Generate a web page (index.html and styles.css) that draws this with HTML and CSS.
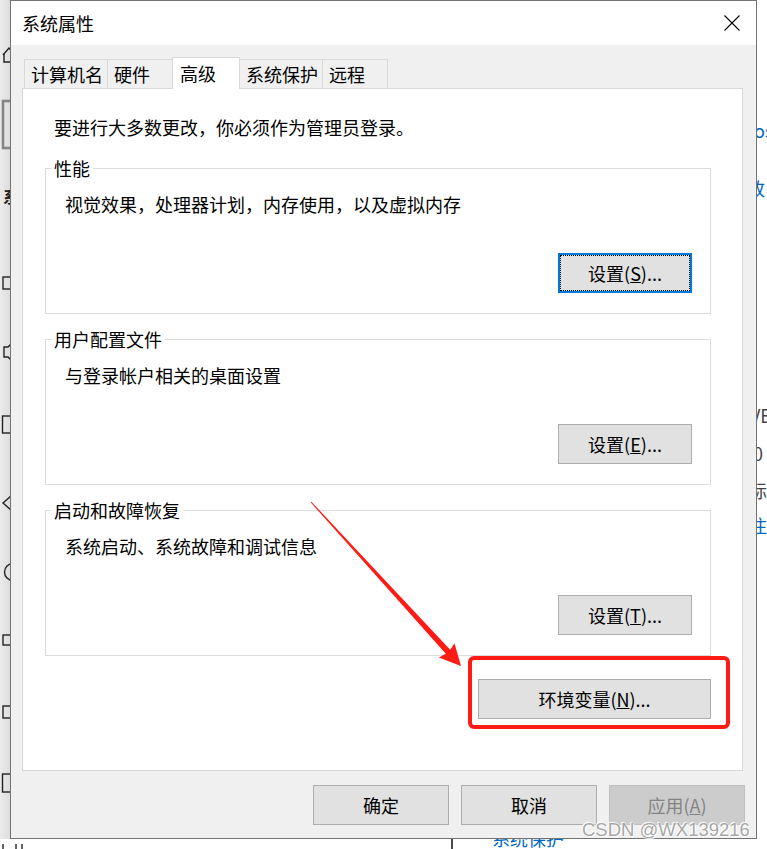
FILE: index.html
```html
<!DOCTYPE html>
<html lang="zh-CN">
<head>
    <meta charset="UTF-8">
    <meta name="viewport" content="width=device-width, initial-scale=1.0">
    <title>系统属性</title>
    <link rel="stylesheet" href="styles.css">
</head>
<body>
    <div class="desktop">
        <!-- 背后的设置窗口（大部分被对话框挡住） -->
        <div class="side"></div>
        <svg class="behind-icons" width="767" height="849" viewBox="0 0 767 849">
            <g fill="none" stroke="#222" stroke-width="1.4">
                <polyline points="3,55 9,48 15,55"/>
                <polyline points="4,54 4,62 14,62"/>
                <rect x="3" y="101" width="20" height="47" stroke="#858585" stroke-width="2.6"/>
                <rect x="3" y="277" width="13" height="12"/>
                <path d="M4 347 H8 L14 341 V363 L8 357 H4 Z"/>
                <rect x="2.5" y="416" width="14" height="17"/>
                <polyline points="11,496 3,503 11,510"/>
                <circle cx="13" cy="572" r="8.5"/>
                <rect x="3" y="635" width="12" height="10"/>
                <rect x="3" y="706" width="12" height="12"/>
                <rect x="2.5" y="774" width="14" height="18"/>
                <path d="M3 844 V849 M16 844 V849 M22 844 V849"/>
            </g>
            <rect x="451" y="835" width="2" height="14" fill="#4a4a4a"/>
        </svg>
        <span class="bg-text side-char">系</span>
        <span class="bg-text blue" style="left:754px; top:118px;">os</span>
        <span class="bg-text blue" style="left:747px; top:176px;">改</span>
        <span class="bg-text gray" style="left:750px; top:403px;">VE</span>
        <span class="bg-text gray" style="left:753px; top:441px;">0</span>
        <span class="bg-text gray" style="left:749px; top:478px;">际</span>
        <span class="bg-text blue" style="left:749px; top:513px;">注</span>
        <span class="bg-text blue" style="left:492px; top:826px;">系统保护</span>

        <div class="window">
            <div class="titlebar">
                <span class="title">系统属性</span>
                <svg class="close" width="16" height="16" viewBox="0 0 16 16">
                    <path d="M0.5 0.5 L15.5 15.5 M15.5 0.5 L0.5 15.5" stroke="#000" stroke-width="1.1" fill="none"/>
                </svg>
            </div>

            <div class="content">
                <div class="tabs">
                    <div class="tab">计算机名</div>
                    <div class="tab">硬件</div>
                    <div class="tab active">高级</div>
                    <div class="tab">系统保护</div>
                    <div class="tab">远程</div>
                </div>

                <div class="panel">
                    <p class="note">要进行大多数更改，你必须作为管理员登录。</p>

                    <fieldset class="group">
                        <legend>性能</legend>
                        <p class="desc">视觉效果，处理器计划，内存使用，以及虚拟内存</p>
                        <div class="row">
                            <button class="btn focus">设置(<u>S</u>)...</button>
                        </div>
                    </fieldset>

                    <fieldset class="group">
                        <legend>用户配置文件</legend>
                        <p class="desc">与登录帐户相关的桌面设置</p>
                        <div class="row">
                            <button class="btn">设置(<u>E</u>)...</button>
                        </div>
                    </fieldset>

                    <fieldset class="group">
                        <legend>启动和故障恢复</legend>
                        <p class="desc">系统启动、系统故障和调试信息</p>
                        <div class="row">
                            <button class="btn">设置(<u>T</u>)...</button>
                        </div>
                    </fieldset>

                    <div class="row env-row">
                        <button class="btn wide">环境变量(<u>N</u>)...</button>
                    </div>
                </div>

                <div class="actions">
                    <button class="btn">确定</button>
                    <button class="btn">取消</button>
                    <button class="btn" disabled>应用(<u>A</u>)</button>
                </div>
            </div>
        </div>

        <!-- 截图上的红色标注 -->
        <div class="mark-box"></div>
        <svg class="mark-arrow" width="767" height="849" viewBox="0 0 767 849">
            <polygon fill="#fe1b16" points="310.6,502.3 445.8,653.8 438.9,657.4 461,666 454.5,643.2 450.2,649.8 311.4,501.7"/>
        </svg>

        <div class="watermark">CSDN @WX139216</div>
    </div>
</body>
</html>
```

FILE: styles.css
```css
* {
    box-sizing: border-box;
}

body {
    margin: 0;
    font-family: "Noto Sans CJK SC", "Microsoft YaHei", sans-serif;
    font-size: 18px;
    line-height: 24px;
    color: #000;
}

.desktop {
    position: relative;
    width: 767px;
    height: 849px;
    overflow: hidden;
    background: #fff;
}

/* 背景窗口的碎片 */
.side {
    position: absolute;
    left: 0;
    top: 0;
    width: 12px;
    height: 839px;
    background: linear-gradient(to right, #ebebeb, #dadada);
}

.behind-icons {
    position: absolute;
    left: 0;
    top: 0;
}

.bg-text {
    position: absolute;
    white-space: nowrap;
}

.blue {
    color: #0067c0;
}

.gray {
    color: #444;
}

.side-char {
    left: 3px;
    top: 184px;
    font-weight: bold;
    font-size: 16px;
    color: #222;
}

/* 对话框 */
.window {
    position: absolute;
    left: 10px;
    top: 0;
    width: 747px;
    height: 839px;
    border: 1px solid #747474;
    background: #f0f0f0;
}

.titlebar {
    height: 44px;
    background: #fff;
    display: flex;
    align-items: center;
    justify-content: space-between;
    padding: 0 16px 0 11px;
}

.close {
    display: block;
}

.content {
    padding: 12px 11px 13px 11px;
}

.tabs {
    display: flex;
    align-items: flex-end;
    margin-left: 2px;
    height: 31px;
}

.tab {
    height: 29px;
    min-width: 66px;
    padding: 0 4px 0 6px;
    border: 1px solid #d9d9d9;
    border-bottom: none;
    margin-left: -1px;
    display: flex;
    align-items: center;
    white-space: nowrap;
}

.tab:first-child {
    margin-left: 0;
}

.tab.active {
    position: relative;
    z-index: 1;
    height: 32px;
    min-width: 68px;
    padding: 0 4px 2px 7px;
    margin-bottom: -1px;
    background: #fff;
}

.panel {
    margin-right: 2px;
    background: #fff;
    border: 1px solid #d9d9d9;
    padding: 26px 31px 51px 22px;
}

.note {
    margin: 0 0 17px 9px;
}

.group {
    margin: 0 0 13px 0;
    padding: 12px 18px 20px 0;
    border: 1px solid #dcdcdc;
    min-inline-size: 0;
}

.group legend {
    margin-left: 5px;
    padding: 0 3px;
    line-height: 24px;
}

.desc {
    margin: 0 0 0 19px;
}

.row {
    display: flex;
    justify-content: flex-end;
    margin-top: 37px;
}

.env-row {
    margin-top: 23px;
}

.btn {
    width: 134px;
    height: 40px;
    padding: 0;
    font-family: inherit;
    font-size: 18px;
    line-height: 24px;
    color: #000;
    background: #e1e1e1;
    border: 1px solid #adadad;
    border-radius: 0;
}

.btn.focus {
    border: 2px solid #0078d7;
    outline: 1px dotted #000;
    outline-offset: -3px;
}

.btn.wide {
    width: 233px;
}

.btn:disabled {
    background: #cccccc;
    border-color: #bfbfbf;
    color: #838383;
}

.actions {
    display: flex;
    justify-content: flex-end;
    gap: 12px;
    margin-top: 14px;
}

.actions .btn {
    width: 136px;
}

/* 标注 */
.mark-box {
    position: absolute;
    left: 468px;
    top: 656px;
    width: 262px;
    height: 73px;
    border: 4px solid #fe1b16;
    border-radius: 6px;
}

.mark-arrow {
    position: absolute;
    left: 0;
    top: 0;
    pointer-events: none;
}

.watermark {
    position: absolute;
    left: 582px;
    top: 819px;
    font-family: "Liberation Sans", Arial, sans-serif;
    font-size: 18.5px;
    line-height: 22px;
    color: rgba(150, 150, 150, 0.85);
    text-shadow: 0 0 2px #fff, 1px 1px 1px #fff, -1px -1px 1px #fff;
    white-space: nowrap;
}
```
